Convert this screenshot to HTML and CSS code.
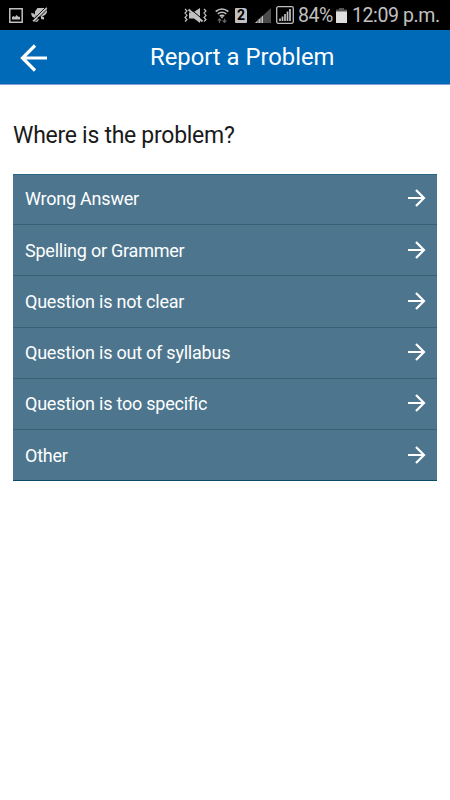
FILE: index.html
```html
<!DOCTYPE html>
<html lang="en">
  <head>
    <meta charset="utf-8">
    <meta name="viewport" content="width=device-width, initial-scale=1">
    <title>Report a Problem</title>
    <link rel="stylesheet" href="styles.css">
  </head>
  <body>
    <div class="status-bar">
      <div class="status-left">
        <svg width="14" height="15" viewBox="0 0 14 15"><path d="M.8.8h12.4v13.4H.8z" fill="none" stroke="currentColor" stroke-width="1.5"/><path d="M3 11.5V9l1.5-1 1.5 1L7.5 7 9 8.5l2 .5v2.5z" fill="currentColor"/></svg>
        <svg width="17" height="16" viewBox="0 0 17 16"><path d="M4 4.5L6.5 1h6.5l3 1v3.5L14 8l-3 1.5H7L4 8zM0 6l3 .5L5 9l-1 2-3-1.5zM3 12l3-1.5 2 2L6 15H3zM10 9.5l3 .5v2.5l-3-.5z" fill="currentColor"/><path d="M15 0L1.5 13.5M17 1.5L3.5 15" stroke="#000" stroke-width="1"/><path d="M15.8.8L2 14.2" stroke="currentColor" stroke-width="1.4"/></svg>
      </div>
      <div class="status-right">
        <svg class="vibrate" width="23" height="15" viewBox="0 0 23 15"><path d="M5 4.5h4L16 0v15l-6-4.5H5z" fill="currentColor"/><path d="M6.5 1l13 11" stroke="#000" stroke-width="1"/><path d="M4.5 1.5L18.5 13.5" stroke="currentColor" stroke-width="2"/><path d="M1 1l2 2-2 2 2 2.5-2 2 2 2-2 2M20 1l2 2-2 2 2 2.5-2 2 2 2-2 2" fill="none" stroke="currentColor" stroke-width="1.2"/></svg>
        <svg class="wifi" width="14" height="15" viewBox="0 0 14 15"><path d="M.7 3.5q6.3-5 12.6 0M2.7 5.9q4.3-3.2 8.6 0M4.7 8.2q2.3-1.6 4.6 0" fill="none" stroke="currentColor" stroke-width="1.6"/><circle cx="7" cy="9.3" r="1" fill="currentColor"/><path d="M4.5 15v-4M2.7 12.7l1.8-1.8 1.8 1.8M9.5 10.5v4M7.7 12.5l1.8 1.8 1.8-1.8" fill="none" stroke="#666" stroke-width="1.2"/></svg>
        <span class="sim">2</span>
        <svg class="signal" width="16" height="15" viewBox="0 0 16 15"><path d="M0 15L16 0v15z" fill="#4b4b4b"/><path d="M0 15l8-7.5V15z" fill="currentColor"/><path d="M3 10v5M6 8v7" stroke="#333" stroke-width=".8"/></svg>
        <svg class="signal-box" width="18" height="18" viewBox="0 0 18 18"><rect x=".7" y=".7" width="16.6" height="16.6" rx="1.5" fill="none" stroke="currentColor" stroke-width="1.3"/><path d="M4 15v-2.5M6.5 15v-4.5M9 15V8M11.5 15V5.5M14 15V3" stroke="currentColor" stroke-width="1.7"/></svg>
        <span class="battery-level">84%</span>
        <svg class="battery" width="11" height="15" viewBox="0 0 11 15"><path d="M3 0h5v1.5h3V4H0V1.5h3z" fill="#555"/><path d="M0 3.5h11V15H0z" fill="#dedede"/></svg>
        <span class="clock">12:09 p.m.</span>
      </div>
    </div>

    <header class="header">
      <svg class="back" width="28" height="28" viewBox="0 0 28 28"><path d="M27 14H2.5M15 1.5L2.5 14 15 26.5" fill="none" stroke="currentColor" stroke-width="3.2"/></svg>
      <h1 class="title">Report a Problem</h1>
    </header>

    <main class="content">
      <h2 class="question">Where is the problem?</h2>
      <ul class="options">
        <li class="option">Wrong Answer <svg class="arrow" viewBox="0 0 18 18"><path d="M0 9h16M8 1l8 8-8 8" /></svg></li>
        <li class="option">Spelling or Grammer <svg class="arrow" viewBox="0 0 18 18"><path d="M0 9h16M8 1l8 8-8 8" /></svg></li>
        <li class="option">Question is not clear <svg class="arrow" viewBox="0 0 18 18"><path d="M0 9h16M8 1l8 8-8 8" /></svg></li>
        <li class="option">Question is out of syllabus <svg class="arrow" viewBox="0 0 18 18"><path d="M0 9h16M8 1l8 8-8 8" /></svg></li>
        <li class="option">Question is too specific <svg class="arrow" viewBox="0 0 18 18"><path d="M0 9h16M8 1l8 8-8 8" /></svg></li>
        <li class="option">Other <svg class="arrow" viewBox="0 0 18 18"><path d="M0 9h16M8 1l8 8-8 8" /></svg></li>
      </ul>
    </main>
  </body>
</html>
```

FILE: styles.css
```css
:root {
  --header-bg: #0069b8;
  --row-bg: #4d768e;
  --row-line: #3b5f74;
  --status-text: #c0c0c0;
}

* {
  box-sizing: border-box;
}

body {
  margin: 0;
  min-height: 100vh;
  background: #fff;
  color: #1a1a1a;
  font-family: Roboto, sans-serif;
}

svg {
  display: block;
  flex: none;
}

/* Status bar */
.status-bar {
  display: flex;
  justify-content: space-between;
  height: 30px;
  padding: 0 10px 0 9px;
  background: #000;
  color: var(--status-text);
}

.status-left,
.status-right {
  display: flex;
  align-items: center;
}

.status-left {
  gap: 8px;
}

.wifi {
  margin-left: 8px;
}

.sim {
  width: 12px;
  height: 15px;
  margin-left: 6px;
  border-radius: 1px 3px 1px 1px;
  background: var(--status-text);
  color: #000;
  font-size: 14px;
  font-weight: 700;
  line-height: 15px;
  text-align: center;
}

.signal {
  margin-left: 8px;
}

.signal-box {
  margin-left: 5px;
}

.battery-level,
.clock {
  padding-top: 1px;
  font-size: 19.5px;
  line-height: 30px;
  letter-spacing: -0.4px;
  white-space: nowrap;
}

.battery-level {
  width: 35px;
  margin-left: 4px;
}

.battery {
  margin-left: 3px;
}

.clock {
  width: 88px;
  margin-left: 5px;
}

/* Header */
.header {
  display: flex;
  align-items: center;
  height: 55px;
  padding: 0 20px;
  border-bottom: 1px solid #7d9fd2;
  background: var(--header-bg);
  color: #fff;
}

.back {
  margin-top: 1px;
}

.title {
  flex: 1;
  margin: 0 0 0 102px;
  font-size: 23.8px;
  font-weight: 400;
  line-height: 54px;
  white-space: nowrap;
}

/* Problem list */
.content {
  padding: 36px 13px 0;
}

.question {
  margin: 0 0 23px;
  font-size: 23px;
  font-weight: 400;
  line-height: 30px;
  letter-spacing: -0.28px;
}

.options {
  margin: 0;
  padding: 0;
  list-style: none;
}

.option {
  display: flex;
  align-items: center;
  justify-content: space-between;
  height: 51.2px;
  padding: 0 11px 0 12px;
  border-bottom: 1px solid var(--row-line);
  background: var(--row-bg);
  color: #fff;
  font-size: 18px;
  letter-spacing: -0.23px;
}

.option:first-child {
  padding-bottom: 2px;
  border-top: 1px solid #286887;
}

.option:last-child {
  border-bottom-color: #0b4a68;
}

.arrow {
  width: 18px;
  height: 18px;
  margin-bottom: 1px;
  fill: none;
  stroke: currentColor;
  stroke-width: 2.2;
}
```
